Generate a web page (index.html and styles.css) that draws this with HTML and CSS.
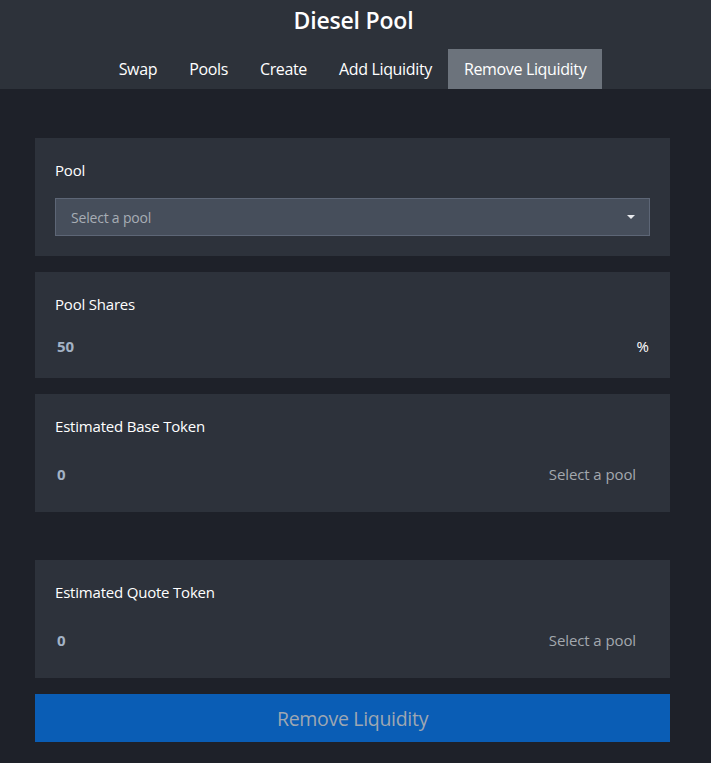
FILE: index.html
```html
<!DOCTYPE html>
<html lang="en">
<head>
  <meta charset="UTF-8">
  <meta name="viewport" content="width=device-width, initial-scale=1.0">
  <title>Diesel Pool</title>
  <link rel="stylesheet" href="styles.css">
</head>
<body>
  <header class="top-bar">
    <h1 class="app-title">Diesel Pool</h1>
    <nav class="nav">
      <a class="nav-item" href="#">Swap</a>
      <a class="nav-item" href="#">Pools</a>
      <a class="nav-item" href="#">Create</a>
      <a class="nav-item" href="#">Add Liquidity</a>
      <a class="nav-item active" href="#">Remove Liquidity</a>
    </nav>
  </header>

  <main class="content">
    <section class="card">
      <div class="card-label">Pool</div>
      <div class="pool-select">
        <span>Select a pool</span>
        <span class="caret"></span>
      </div>
    </section>

    <section class="card">
      <div class="card-label">Pool Shares</div>
      <div class="value-row shares-row">
        <span class="amount">50</span>
        <span class="unit">%</span>
      </div>
    </section>

    <section class="card">
      <div class="card-label">Estimated Base Token</div>
      <div class="value-row token-row">
        <span class="amount">0</span>
        <span class="token-name">Select a pool</span>
      </div>
    </section>

    <div class="spacer"></div>

    <section class="card">
      <div class="card-label">Estimated Quote Token</div>
      <div class="value-row token-row">
        <span class="amount">0</span>
        <span class="token-name">Select a pool</span>
      </div>
    </section>

    <button class="submit-btn" disabled>Remove Liquidity</button>
  </main>
</body>
</html>
```

FILE: styles.css
```css
* {
  box-sizing: border-box;
}

body {
  margin: 0;
  background: #1e2129;
  color: #ffffff;
  font-family: "Open Sans", "Noto Sans", sans-serif;
}

.top-bar {
  background: #2d323a;
  text-align: center;
}

.app-title {
  margin: 0;
  height: 49px;
  padding-top: 4px;
  padding-right: 4px;
  font-size: 23px;
  font-weight: 600;
  line-height: 32px;
  letter-spacing: -0.2px;
}

.nav {
  display: flex;
  justify-content: center;
  padding-right: 6px;
}

.nav-item {
  display: block;
  height: 40px;
  padding: 0 16px;
  line-height: 41px;
  font-size: 16px;
  color: #ffffff;
  text-decoration: none;
  letter-spacing: -0.35px;
}

.nav-item.active {
  background: #6c737c;
}

.content {
  width: 635px;
  margin-left: 35px;
  padding-top: 49px;
}

.card {
  background: #2d323b;
  padding: 20px;
  margin-bottom: 16px;
}

.card-label {
  font-size: 15px;
  line-height: 25px;
  letter-spacing: -0.2px;
}

.pool-select {
  display: flex;
  justify-content: space-between;
  align-items: center;
  height: 38px;
  margin-top: 15px;
  padding: 0 15px;
  background: #464e5b;
  border: 1px solid #5d6676;
  color: #a7adb5;
  font-size: 14px;
  letter-spacing: -0.2px;
}

.caret {
  width: 0;
  height: 0;
  margin-right: -1px;
  border-left: 4px solid transparent;
  border-right: 4px solid transparent;
  border-top: 4px solid #e8eaee;
}

.value-row {
  display: flex;
  justify-content: space-between;
  align-items: center;
  height: 24px;
  font-size: 15px;
}

.shares-row {
  margin-top: 17px;
}

.token-row {
  margin-top: 23px;
  margin-bottom: 6px;
}

.amount {
  padding-left: 2px;
  font-weight: 700;
  color: #a3b2c5;
}

.unit {
  padding-right: 1px;
}

.token-name {
  padding-right: 14px;
  color: #a3a8ae;
  letter-spacing: -0.1px;
}

.spacer {
  height: 32px;
}

.submit-btn {
  display: block;
  width: 100%;
  height: 48px;
  border: 0;
  background: #0a5db5;
  color: #9ea7b2;
  font-family: inherit;
  font-size: 19.5px;
  letter-spacing: -0.3px;
}
```
